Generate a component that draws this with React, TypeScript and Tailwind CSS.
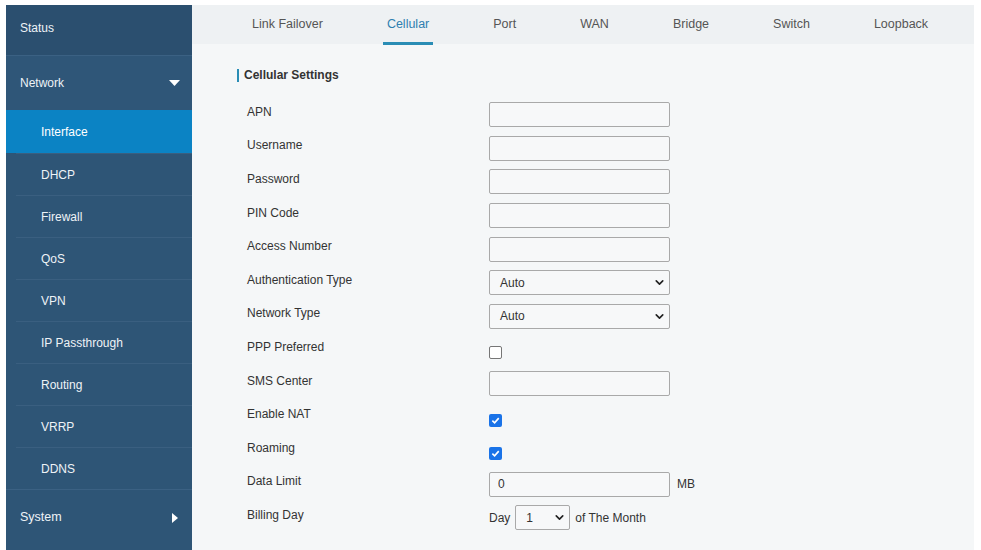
import { ChevronDown } from "lucide-react";

const subItems = [
  "Interface",
  "DHCP",
  "Firewall",
  "QoS",
  "VPN",
  "IP Passthrough",
  "Routing",
  "VRRP",
  "DDNS",
];

const tabs = ["Link Failover", "Cellular", "Port", "WAN", "Bridge", "Switch", "Loopback"];

function TextBox({ value = "" }: { value?: string }) {
  return (
    <input
      type="text"
      defaultValue={value}
      className="h-[25px] w-[181px] rounded-[2px] border border-[#a9a9a9] bg-[#f7f8f9] px-2 text-[12px] text-[#333] outline-none"
    />
  );
}

function SelectBox({ value, w = "w-[181px]" }: { value: string; w?: string }) {
  return (
    <div
      className={`flex h-[25px] ${w} items-center justify-between rounded-[2px] border border-[#a9a9a9] bg-[#f7f8f9] pl-[10px] pr-[3px] text-[12px] text-[#333]`}
    >
      <span>{value}</span>
      <ChevronDown size={13} strokeWidth={3} className="text-[#222]" />
    </div>
  );
}

function Check({ on }: { on?: boolean }) {
  return on ? (
    <span className="mt-[6px] flex h-[13px] w-[13px] items-center justify-center rounded-[2px] bg-[#1a73e8]">
      <svg width="9" height="9" viewBox="0 0 10 10">
        <path d="M1.5 5.2 L4 7.6 L8.6 2.4" fill="none" stroke="white" strokeWidth="1.8" />
      </svg>
    </span>
  ) : (
    <span className="mt-[6px] h-[13px] w-[13px] rounded-[2px] border border-[#767676] bg-white" />
  );
}

function Row({ label, children }: { label: string; children: React.ReactNode }) {
  return (
    <div className="flex h-[33.6px] items-center">
      <div className="w-[297px] -translate-y-[3px] pl-[55px] text-[12px] text-[#333]">{label}</div>
      <div className="flex items-center">{children}</div>
    </div>
  );
}

export default function App() {
  return (
    <div
      className="flex h-[550px] w-[981px] bg-white pl-[6px] pr-[7px] pt-[5px]"
      style={{ fontFamily: "'Liberation Sans', Arial, sans-serif" }}
    >
      <aside className="flex w-[186px] flex-col bg-[#2e5576] text-[12px] text-[#eef3f7]">
        <div className="flex h-[50px] items-center bg-[#2b4f6f] pb-[4px] pl-[14px]">Status</div>
        <div className="flex h-[55px] items-center justify-between border-t border-[#3b6183] bg-[#2f5678] pl-[14px] pr-[12px]">
          <span>Network</span>
          <svg width="11" height="7" viewBox="0 0 11 7">
            <path d="M0 0 H11 L5.5 6 Z" fill="white" />
          </svg>
        </div>
        {subItems.map((item, i) =>
          i === 0 ? (
            <div key={item} className="flex h-[43px] items-center bg-[#0b83c4] pl-[35px] text-white">
              {item}
            </div>
          ) : (
            <div key={item} className="ml-[10px] flex h-[42px] items-center border-t border-[#3a5f80] pl-[25px]">
              {item}
            </div>
          )
        )}
        <div className="flex h-[56px] items-center justify-between border-t border-[#3b6183] pl-[14px] pr-[14px]">
          <span className="text-[12.5px]">System</span>
          <svg width="6" height="10" viewBox="0 0 6 10">
            <path d="M0 0 L6 5 L0 10 Z" fill="white" />
          </svg>
        </div>
      </aside>

      <main className="flex flex-1 flex-col bg-[#f5f7f8]">
        <nav className="flex h-[39px] bg-[#eef1f3] pl-[28px]">
          {tabs.map((t) => (
            <div
              key={t}
              className={`relative flex shrink-0 items-center px-[32px] text-[12.5px] ${
                t === "Cellular" ? "text-[#2e7fb0]" : "text-[#555]"
              }`}
            >
              {t}
              {t === "Cellular" && (
                <span className="absolute bottom-[-1px] left-[28px] right-[28px] h-[3px] bg-[#2a8db5]" />
              )}
            </div>
          ))}
        </nav>

        <div className="flex items-center pl-[45px] pt-[22px]">
          <span className="h-[13px] w-[2px] bg-[#2a8db5]" />
          <span className="ml-[5px] text-[12px] font-bold text-[#333]">Cellular Settings</span>
        </div>

        <div className="mt-[14px] flex flex-col">
          <Row label="APN">
            <TextBox />
          </Row>
          <Row label="Username">
            <TextBox />
          </Row>
          <Row label="Password">
            <TextBox />
          </Row>
          <Row label="PIN Code">
            <TextBox />
          </Row>
          <Row label="Access Number">
            <TextBox />
          </Row>
          <Row label="Authentication Type">
            <SelectBox value="Auto" />
          </Row>
          <Row label="Network Type">
            <SelectBox value="Auto" />
          </Row>
          <Row label="PPP Preferred">
            <Check />
          </Row>
          <Row label="SMS Center">
            <TextBox />
          </Row>
          <Row label="Enable NAT">
            <Check on />
          </Row>
          <Row label="Roaming">
            <Check on />
          </Row>
          <Row label="Data Limit">
            <TextBox value="0" />
            <span className="ml-[7px] text-[12px] text-[#333]">MB</span>
          </Row>
          <Row label="Billing Day">
            <span className="mr-[5px] text-[12px] text-[#333]">Day</span>
            <SelectBox value="1" w="w-[55px]" />
            <span className="ml-[5px] text-[12px] text-[#333]">of The Month</span>
          </Row>
        </div>
      </main>
    </div>
  );
}
